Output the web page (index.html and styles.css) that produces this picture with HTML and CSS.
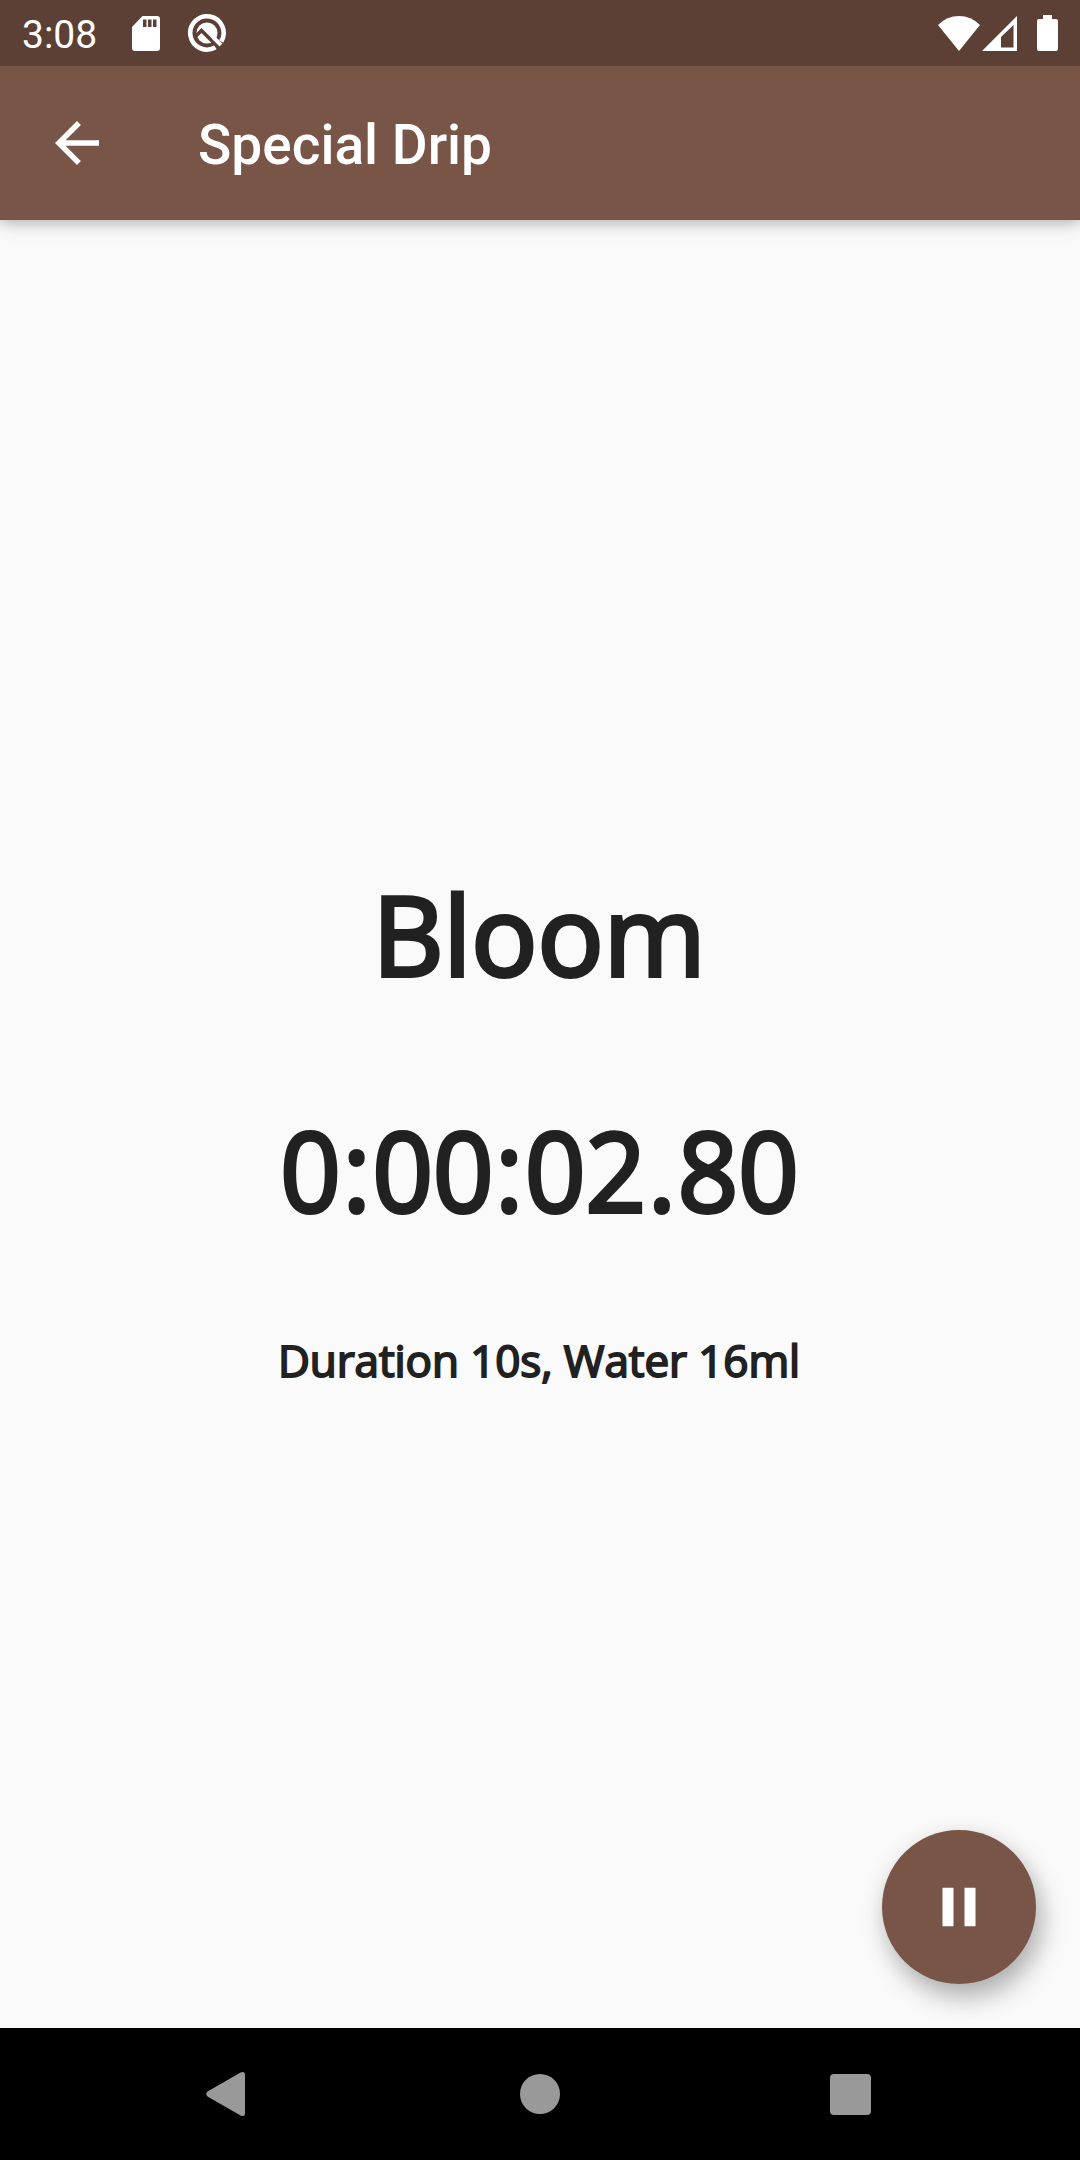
FILE: index.html
```html
<!DOCTYPE html>
<html lang="en">
<head>
<meta charset="utf-8">
<title>Special Drip</title>
<link rel="stylesheet" href="styles.css">
</head>
<body>
<div class="screen">
  <header class="status">
    <span class="clock">3:08</span>
    <svg class="sd" width="28" height="35" viewBox="0 0 28 35"><path fill="#fff" fill-rule="evenodd" d="M10.500 0H25q3 0 3 3V32q0 3-3 3H3q-3 0-3-3V11ZM11 3.500V11h3.500V3.500ZM16 3.500V11h3.500V3.500ZM21 3.500V11h3.500V3.500Z"/></svg>
    <svg class="debug" width="40" height="40" viewBox="0 0 40 40"><path fill="none" stroke="#fff" stroke-width="4.600" d="M28.500 34.300A16.700 16.700 0 1 1 34.300 28.500"/><circle cx="20" cy="20" r="10.500" fill="#fff"/><path fill="none" stroke="#5c4036" stroke-width="3.600" d="M7 25L14.500 17.500L33 36"/><path fill="none" stroke="#fff" stroke-width="4" d="M26.500 24.500L34 32"/></svg>
    <div class="system">
      <svg width="42" height="35" viewBox="0 0 42 35"><path fill="#fff" d="M0 9Q9 0 21 0T42 9L21 35Z"/></svg>
      <svg class="signal" width="35" height="35" viewBox="0 0 35 35"><path fill="#fff" fill-rule="evenodd" d="M35 0V35H0ZM31.500 9L19 21V31.500H31.500Z"/></svg>
      <svg class="battery" width="21" height="36" viewBox="0 0 21 36"><path fill="#fff" d="M6 0h9v4h4q2 0 2 2v28q0 2-2 2H2q-2 0-2-2V6q0-2 2-2h4Z"/></svg>
    </div>
  </header>
  <div class="appbar">
    <svg class="back" width="66" height="66" viewBox="0 0 24 24"><path fill="#fff" d="M20 11H7.830l5.590-5.590L12 4l-8 8 8 8 1.410-1.410L7.830 13H20z"/></svg>
    <h1 class="title">Special Drip</h1>
  </div>
  <main class="content">
    <div class="step">Bloom</div>
    <div class="timer">0<span class="sep">:</span>00<span class="sep">:</span>02<span class="sep">.</span>80</div>
    <div class="detail">Duration 10s, Water 16ml</div>
    <button class="fab" aria-label="Pause"><svg width="66" height="66" viewBox="0 0 24 24"><path fill="#fff" d="M6 19h4V5H6zm8-14v14h4V5z"/></svg></button>
  </main>
  <nav class="nav">
    <svg width="39" height="46" viewBox="0 0 40 46"><path fill="#999" d="M1.500 20.500L35.500 1Q40-1 40 3.500V42.500Q40 47 35.500 45L1.500 25.500Q-1 23 1.500 20.500Z"/></svg>
    <span class="home"></span>
    <span class="recent"></span>
  </nav>
</div>
</body>
</html>
```
FILE: styles.css
```css
body { margin: 0; }
.screen {
  width: 1080px;
  height: 2160px;
  display: flex;
  flex-direction: column;
  background: #fafafa;
  color: #212121;
  overflow: hidden;
}
.status {
  height: 66px;
  display: flex;
  align-items: center;
  background: #5c4036;
  box-sizing: border-box;
  padding: 0 22px;
  z-index: 1;
}
.clock {
  width: 110px;
  font: 400 39px/64px Roboto, sans-serif;
  color: #fff;
  padding-top: 4px;
}
.debug { margin-left: 27px; }
.system { margin-left: auto; display: flex; align-items: center; }
.signal { margin-left: 2px; }
.battery { margin-left: 20px; }
.appbar {
  height: 154px;
  display: flex;
  align-items: center;
  box-sizing: border-box;
  padding-left: 44px;
  background: #795548;
  color: #fff;
  box-shadow: 0 4px 18px rgba(0, 0, 0, .18), 0 3px 10px rgba(0, 0, 0, .12);
}
.title {
  margin: 0 0 0 88px;
  padding-top: 3px;
  font: 500 55px/64px Roboto, sans-serif;
}
.content {
  flex: 1;
  display: flex;
  flex-direction: column;
  align-items: center;
  padding-top: 638px;
  font-family: "Open Sans", "Noto Sans", sans-serif;
}
.step, .timer {
  font-size: 110px;
  line-height: 150px;
  -webkit-text-stroke: 4px #212121;
}
.step { margin-right: 2px; }
.timer {
  margin-top: 86px;
  transform: scaleX(.962);
}
.sep { padding: 0 2px; }
.detail {
  margin: 86px 2px 0 0;
  font-size: 44px;
  line-height: 60px;
  letter-spacing: -.08px;
  -webkit-text-stroke: 1.9px #212121;
}
.fab {
  align-self: flex-end;
  margin: auto 44px 44px 0;
  width: 154px;
  height: 154px;
  padding: 0;
  border: 0;
  border-radius: 50%;
  display: flex;
  align-items: center;
  justify-content: center;
  background: #795548;
  box-shadow: 6px 14px 26px rgba(0, 0, 0, .28), 0 2px 24px rgba(0, 0, 0, .06);
}
.nav {
  height: 132px;
  display: flex;
  align-items: center;
  box-sizing: border-box;
  padding-left: 206px;
  background: #000;
}
.home {
  width: 40px;
  height: 40px;
  margin-left: 275px;
  border-radius: 50%;
  background: #999;
}
.recent {
  width: 41px;
  height: 41px;
  margin-left: 270px;
  border-radius: 4px;
  background: #999;
}
```
